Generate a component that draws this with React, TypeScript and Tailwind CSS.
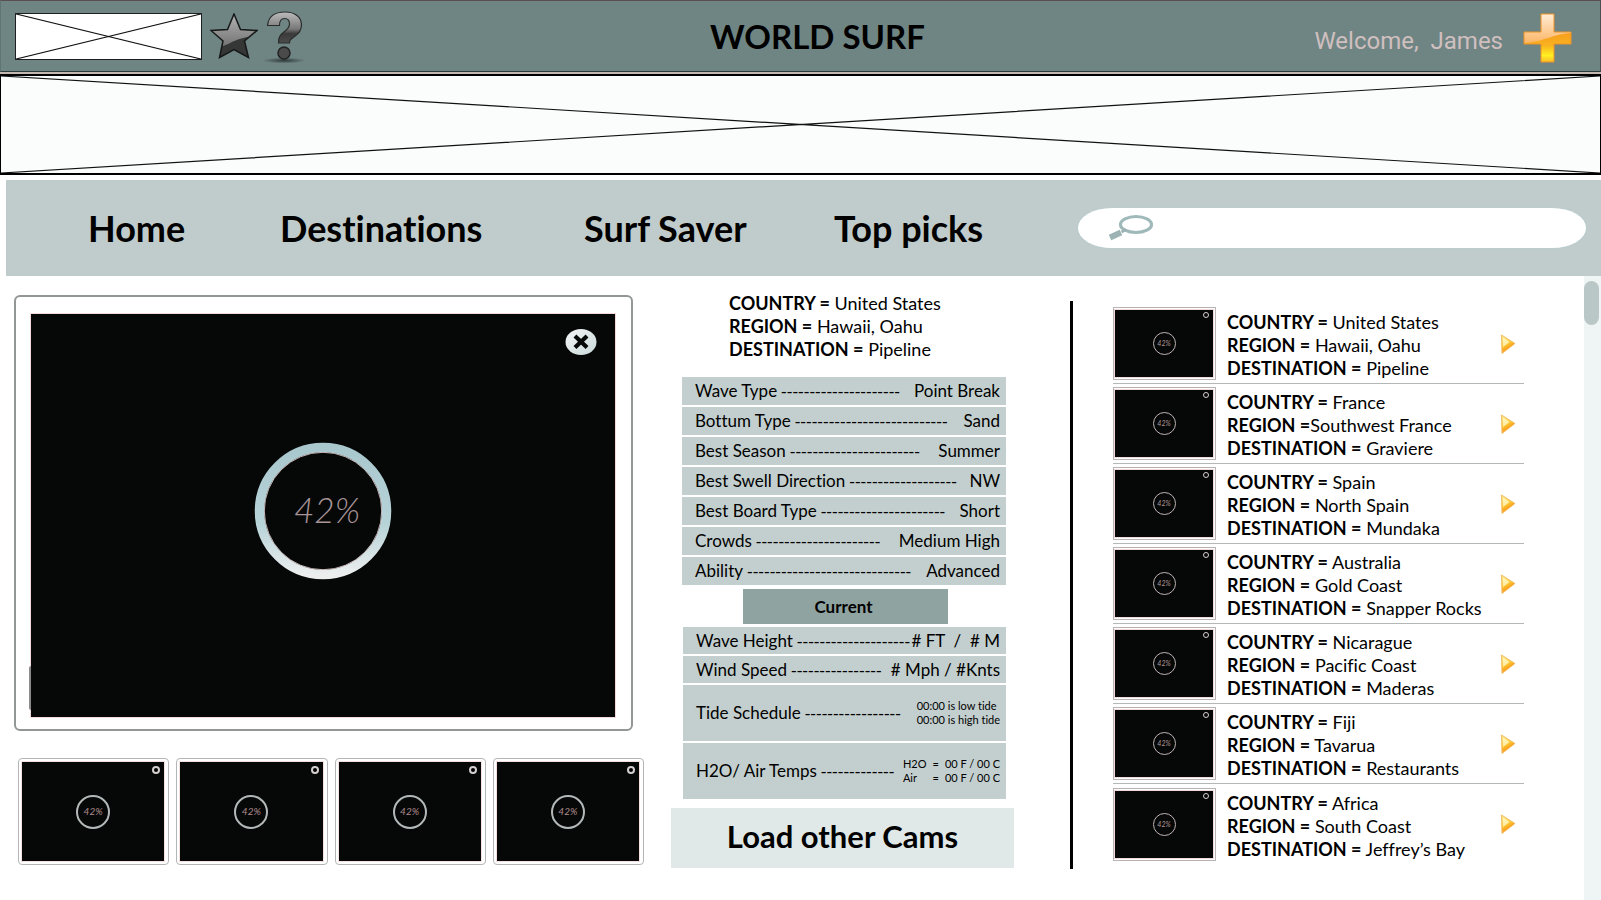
type Spot = { country: string; region: string; destination: string };

const spots: Spot[] = [
  { country: "United States", region: " Hawaii, Oahu", destination: "Pipeline" },
  { country: "France", region: "Southwest France", destination: "Graviere" },
  { country: "Spain", region: " North Spain", destination: "Mundaka" },
  { country: "Australia", region: " Gold Coast", destination: "Snapper Rocks" },
  { country: "Nicarague", region: " Pacific Coast", destination: "Maderas" },
  { country: "Fiji", region: " Tavarua", destination: "Restaurants" },
  { country: "Africa", region: " South Coast", destination: "Jeffrey’s Bay" },
];

const facts = [
  { label: "Wave Type", dashes: 21, value: "Point Break" },
  { label: "Bottum Type", dashes: 27, value: "Sand" },
  { label: "Best Season", dashes: 23, value: "Summer" },
  { label: "Best Swell Direction", dashes: 19, value: "NW" },
  { label: "Best Board Type", dashes: 22, value: "Short" },
  { label: "Crowds", dashes: 22, value: "Medium High" },
  { label: "Ability", dashes: 29, value: "Advanced" },
];

function CrossBox({ className }: { className: string }) {
  return (
    <svg className={className} viewBox="0 0 100 100" preserveAspectRatio="none" aria-hidden="true">
      <path d="M0 0L100 100M0 100L100 0" stroke="#111" strokeWidth="1.2" vectorEffect="non-scaling-stroke" />
    </svg>
  );
}

function StarIcon() {
  return (
    <svg width="48" height="46" viewBox="0 0 48 46" aria-hidden="true">
      <defs>
        <linearGradient id="star-top" x1="0" y1="0" x2="0" y2="1">
          <stop offset="0" stopColor="#b4b4b4" />
          <stop offset="1" stopColor="#5c5c5c" />
        </linearGradient>
        <clipPath id="star-clip">
          <path d="M24 1L30.5 16.5L47 17.5L34.5 28L38.5 44.5L24 36.5L9.5 44.5L13 28L1 17.5L17.5 16.5Z" />
        </clipPath>
      </defs>
      <g clipPath="url(#star-clip)">
        <rect width="48" height="46" fill="url(#star-top)" />
        <path d="M8 34C20 33 24 24 48 23V46H6Z" fill="#353636" />
        <path d="M8 46C20 42 30 41 40 46Z" fill="#4c4c4c" />
      </g>
      <path d="M24 1L30.5 16.5L47 17.5L34.5 28L38.5 44.5L24 36.5L9.5 44.5L13 28L1 17.5L17.5 16.5Z" fill="none" stroke="#161818" strokeWidth="1.5" />
    </svg>
  );
}

function HelpIcon() {
  return (
    <svg width="46" height="54" viewBox="0 0 46 54" aria-hidden="true">
      <defs>
        <linearGradient id="help-fill" x1="0" y1="0" x2="0" y2="1">
          <stop offset="0" stopColor="#bdbdbd" />
          <stop offset="0.55" stopColor="#777" />
          <stop offset="0.7" stopColor="#3a3a3a" />
          <stop offset="1" stopColor="#4c4c4c" />
        </linearGradient>
        <radialGradient id="help-shadow">
          <stop offset="0" stopColor="#1f2827" stopOpacity="0.8" />
          <stop offset="1" stopColor="#1f2827" stopOpacity="0" />
        </radialGradient>
      </defs>
      <ellipse cx="23" cy="49.5" rx="22" ry="3" fill="url(#help-shadow)" />
      <path
        d="M6.500 14.500C7.500 5 14 1 24 1C34 1 40.500 6 40.500 14C40.500 19.500 38 22.500 33.500 25.500C29 28.500 28.500 29.500 28.500 32H17.500C17.500 26 19 24 23.500 20.500C27 18 28.500 16.500 28.500 13C28.500 9.500 27 7.500 23.500 7.500C20.500 7.500 18.500 9.500 18.500 14.500Z"
        fill="url(#help-fill)"
        stroke="#2a2c2c"
        strokeWidth="1.2"
      />
      <circle cx="23" cy="42" r="6" fill="#4a4a4a" stroke="#222" strokeWidth="1.5" />
    </svg>
  );
}

function PlusIcon() {
  return (
    <svg width="49" height="50" viewBox="0 0 49 50" aria-hidden="true">
      <defs>
        <linearGradient id="plus-base" x1="0" y1="0" x2="0" y2="1">
          <stop offset="0.35" stopColor="#f79a1e" />
          <stop offset="0.65" stopColor="#f9b21f" />
          <stop offset="0.85" stopColor="#fff022" />
          <stop offset="1" stopColor="#f9b52a" />
        </linearGradient>
        <linearGradient id="plus-shine" x1="0" y1="0" x2="0" y2="1">
          <stop offset="0" stopColor="#ffeeda" />
          <stop offset="1" stopColor="#fcb667" />
        </linearGradient>
        <clipPath id="plus-clip">
          <path d="M18 1H31V19H48V31H31V49H18V31H1V19H18Z" />
        </clipPath>
      </defs>
      <g clipPath="url(#plus-clip)">
        <rect width="49" height="50" fill="url(#plus-base)" />
        <path d="M0 0H49V20C32 20 22 29 0 30Z" fill="url(#plus-shine)" />
      </g>
      <path d="M18 1H31V19H48V31H31V49H18V31H1V19H18Z" fill="none" stroke="#ef9226" strokeWidth="1" />
    </svg>
  );
}

function SearchIcon() {
  return (
    <svg width="52" height="28" viewBox="0 0 52 28" aria-hidden="true">
      <ellipse cx="34" cy="10.5" rx="15.5" ry="8" fill="#fff" stroke="#9fb9ba" strokeWidth="3.2" />
      <path d="M19 18.500L8 23.500" stroke="#9db3b3" strokeWidth="6" />
      <path d="M19.500 18L24 15.500" stroke="#9db3b3" strokeWidth="3" />
    </svg>
  );
}

function PlayIcon() {
  return (
    <svg width="16" height="22" viewBox="0 0 16 22" aria-hidden="true">
      <defs>
        <linearGradient id="play-fill" x1="0" y1="0" x2="0.4" y2="1">
          <stop offset="0" stopColor="#fff0a0" />
          <stop offset="0.5" stopColor="#ffd23c" />
          <stop offset="0.75" stopColor="#f9a51e" />
          <stop offset="1" stopColor="#f7b154" />
        </linearGradient>
      </defs>
      <path d="M1.5 2L15 10.5L2 20.5Z" fill="url(#play-fill)" stroke="#f3bd62" strokeWidth="1" strokeLinejoin="round" />
      <path d="M3 4.5L9.5 9L3.2 14Z" fill="#fffbd8" opacity="0.7" />
    </svg>
  );
}

function CloseIcon() {
  return (
    <svg width="32" height="28" viewBox="0 0 32 28" aria-hidden="true">
      <defs>
        <linearGradient id="close-fill" x1="0" y1="0" x2="1" y2="1">
          <stop offset="0" stopColor="#f4f4f4" />
          <stop offset="1" stopColor="#c9dadb" />
        </linearGradient>
      </defs>
      <ellipse cx="16" cy="14" rx="15.5" ry="13" fill="url(#close-fill)" />
      <path d="M11.500 9.500L20.500 18M20.500 9.500L11.500 18" stroke="#060808" strokeWidth="4.2" strokeLinecap="square" />
    </svg>
  );
}

function BigRing() {
  return (
    <svg className="absolute inset-0" width="138" height="138" viewBox="0 0 138 138" aria-hidden="true">
      <defs>
        <linearGradient id="ring-fill" x1="0" y1="0" x2="0" y2="1">
          <stop offset="0" stopColor="#a9c8ce" />
          <stop offset="0.6" stopColor="#b6d3d8" />
          <stop offset="1" stopColor="#eceeee" />
        </linearGradient>
      </defs>
      <circle cx="69" cy="69" r="63.5" fill="none" stroke="url(#ring-fill)" strokeWidth="9.5" />
      <circle cx="69" cy="69" r="58.7" fill="none" stroke="#ecd5d6" strokeWidth="0.8" />
    </svg>
  );
}

function CamThumb() {
  return (
    <button
      type="button"
      aria-label="Open cam"
      className="h-[107px] min-w-0 flex-1 rounded-sm border border-[#b5b5b5] bg-white py-[3px] pr-1 pl-[3px]"
    >
      <span className="relative flex size-full items-center justify-center bg-[#060808] ring-1 ring-[#f6dfdf]">
        <span className="flex size-[34px] items-center justify-center rounded-full border-2 border-[#b3b8b9] text-[10px] text-[#b08c8c] italic">
          42%
        </span>
        <span className="absolute top-1 right-1 size-2 rounded-full border-2 border-[#d5d0d0] bg-black" />
      </span>
    </button>
  );
}

function SpotThumb() {
  return (
    <div className="h-[73px] w-[103px] shrink-0 border border-[#b9b4b4] bg-white py-[2px] pr-[2px] pl-px">
      <div className="relative flex size-full items-center justify-center bg-[#060808] ring-1 ring-[#f3d9d9]">
        <span className="flex size-[23px] items-center justify-center rounded-full border border-[#c0b4b4] text-[7px] text-[#b49a9a] italic">
          42%
        </span>
        <span className="absolute top-[2px] right-1 size-[6px] rounded-full border border-[#d8d0d0]" />
      </div>
    </div>
  );
}

function SpotText({ spot }: { spot: Spot }) {
  return (
    <div className="text-[18px] leading-[23px] whitespace-nowrap">
      <p>
        <b>COUNTRY =</b> {spot.country}
      </p>
      <p>
        <b>REGION =</b>
        {spot.region}
      </p>
      <p>
        <b>DESTINATION =</b> {spot.destination}
      </p>
    </div>
  );
}

function Dashes({ count }: { count: number }) {
  return (
    <span className="ml-1 font-['Liberation_Sans',sans-serif]" aria-hidden="true">
      {"-".repeat(count)}
    </span>
  );
}

export default function App() {
  return (
    <div className="flex min-h-screen flex-col bg-white font-[Lato,sans-serif] text-black [font-variant-ligatures:no-common-ligatures]">
      <header className="grid h-[72px] grid-cols-[1fr_auto_1fr] items-center border border-t-[#5b4e53] border-r-[#4b4f50] border-b-[#2b3a3a] border-l-[#5f7473] bg-[#6f8584] pr-7 pl-[14px]">
        <div className="flex items-center">
          <div className="h-[47px] w-[187px] border border-[#1c2020] bg-white">
            <CrossBox className="size-full" />
          </div>
          <button type="button" aria-label="Favourites" className="ml-2">
            <StarIcon />
          </button>
          <button type="button" aria-label="Help" className="ml-[3px] pt-1">
            <HelpIcon />
          </button>
        </div>
        <h1 className="ml-12 text-[33px] leading-[40px] font-bold">WORLD SURF</h1>
        <div className="flex items-center justify-end gap-5">
          <span className="pt-[10px] font-[Roboto,sans-serif] text-[24px] leading-[30px] whitespace-pre text-[#d0bfbf]">
            {"Welcome,  James"}
          </span>
          <button type="button" aria-label="Add" className="pt-1">
            <PlusIcon />
          </button>
        </div>
      </header>

      <div className="h-[2px] bg-[#c5b8b0]" />
      <div className="h-[101px] border-x border-y-2 border-black bg-[#fbfdfc]">
        <CrossBox className="size-full" />
      </div>

      <nav className="mt-[5px] ml-[6px] grid h-24 grid-cols-[192fr_304fr_250fr_244fr_508fr_15fr] items-center bg-[#c0cbcb] pl-[82px] text-[36px] leading-[40px] font-bold whitespace-nowrap">
        <a href="#home">Home</a>
        <a href="#destinations">Destinations</a>
        <a href="#saver">Surf Saver</a>
        <a href="#picks">Top picks</a>
        <label className="flex h-10 items-center rounded-[34px/20px] bg-white pl-6 shadow-[0_0_2px_#b5d3d5]">
          <SearchIcon />
          <input type="search" aria-label="Search" className="ml-3 min-w-0 flex-1 bg-transparent text-xl font-normal outline-none" />
        </label>
      </nav>

      <main className="grid flex-1 grid-cols-[671fr_399fr_514fr_17px]">
        <section className="pt-[19px]">
          <div className="mr-[38px] ml-[14px] h-[436px] rounded-md border-2 border-[#929695] bg-white pt-[17px] pr-4 pb-[12px] pl-[15px]">
            <div className="relative flex size-full items-center justify-center bg-[#060808] pb-[10px] ring-1 ring-[#f3d9d9]">
              <button type="button" aria-label="Close" className="absolute top-[14px] right-[18px]">
                <CloseIcon />
              </button>
              <div className="relative flex size-[138px] items-center justify-center">
                <BigRing />
                <span className="pb-[2px] pl-2 text-[35px] leading-none font-light text-[#a89597] italic">42%</span>
              </div>
              <span className="absolute bottom-[7px] -left-[2px] h-11 w-[2px] rounded-l bg-[#8a8a8a]" />
            </div>
          </div>
          <div className="mt-[27px] mr-[27px] ml-[18px] flex gap-[7px]">
            <CamThumb />
            <CamThumb />
            <CamThumb />
            <CamThumb />
          </div>
        </section>

        <section className="mr-14 pt-4">
          <div className="ml-[58px]">
            <SpotText spot={spots[0]} />
          </div>
          <dl className="mt-4 mr-2 ml-[11px] flex flex-col gap-[2px] text-[17px] leading-7 whitespace-nowrap">
            {facts.map((f) => (
              <div key={f.label} className="flex h-7 bg-[#c3cfce] pr-[6px] pl-[13px]">
                <dt>
                  {f.label}
                  <Dashes count={f.dashes} />
                </dt>
                <dd className="ml-auto">{f.value}</dd>
              </div>
            ))}
          </dl>
          <h2 className="mt-1 mr-[66px] ml-[72px] h-[35px] bg-[#8fa3a1] pr-1 text-center text-[17px] leading-[35px] font-bold">
            Current
          </h2>
          <dl className="mt-[3px] mr-2 ml-3 flex flex-col gap-[2px] text-[17px] leading-[27px] whitespace-nowrap">
            <div className="flex h-[27px] bg-[#c3cfce] pr-[6px] pl-[13px]">
              <dt>
                Wave Height
                <Dashes count={20} />
              </dt>
              <dd className="ml-auto whitespace-pre">{"# FT  /  # M"}</dd>
            </div>
            <div className="flex h-[27px] bg-[#c3cfce] pr-[6px] pl-[13px]">
              <dt>
                Wind Speed
                <Dashes count={16} />
              </dt>
              <dd className="ml-auto"># Mph / #Knts</dd>
            </div>
            <div className="flex h-14 items-center bg-[#c3cfce] pr-[6px] pl-[13px]">
              <dt>
                Tide Schedule
                <Dashes count={17} />
              </dt>
              <dd className="ml-auto text-[11px] leading-[14px]">
                <p>00:00 is low tide</p>
                <p>00:00 is high tide</p>
              </dd>
            </div>
            <div className="flex h-14 items-center bg-[#c3cfce] pr-[6px] pl-[13px]">
              <dt>
                H2O/ Air Temps
                <Dashes count={13} />
              </dt>
              <dd className="ml-auto grid grid-cols-[auto_auto_auto] gap-x-[6px] text-[11px] leading-[14px]">
                <span>H2O</span>
                <span>=</span>
                <span>00 F / 00 C</span>
                <span>Air</span>
                <span>=</span>
                <span>00 F / 00 C</span>
              </dd>
            </div>
          </dl>
          <button type="button" className="mt-[9px] h-[60px] w-full bg-[#e0e9e7] pb-[3px] text-[31px] font-bold">
            Load other Cams
          </button>
        </section>

        <section className="mt-[25px] h-[568px] border-l-[3px] border-black">
          <ul className="mr-[60px] ml-10 pt-[3px]">
            {spots.map((s) => (
              <li key={s.country} className="flex h-20 items-center border-b border-[#b4b7b7] last:border-b-0">
                <SpotThumb />
                <div className="ml-[11px] pt-1">
                  <SpotText spot={s} />
                </div>
                <button type="button" aria-label="Play" className="mr-2 ml-auto">
                  <PlayIcon />
                </button>
              </li>
            ))}
          </ul>
        </section>

        <div className="bg-[#eff4f4] pt-[5px]">
          <div className="h-11 w-[15px] rounded-full bg-[#b9c8c7]" />
        </div>
      </main>
    </div>
  );
}
